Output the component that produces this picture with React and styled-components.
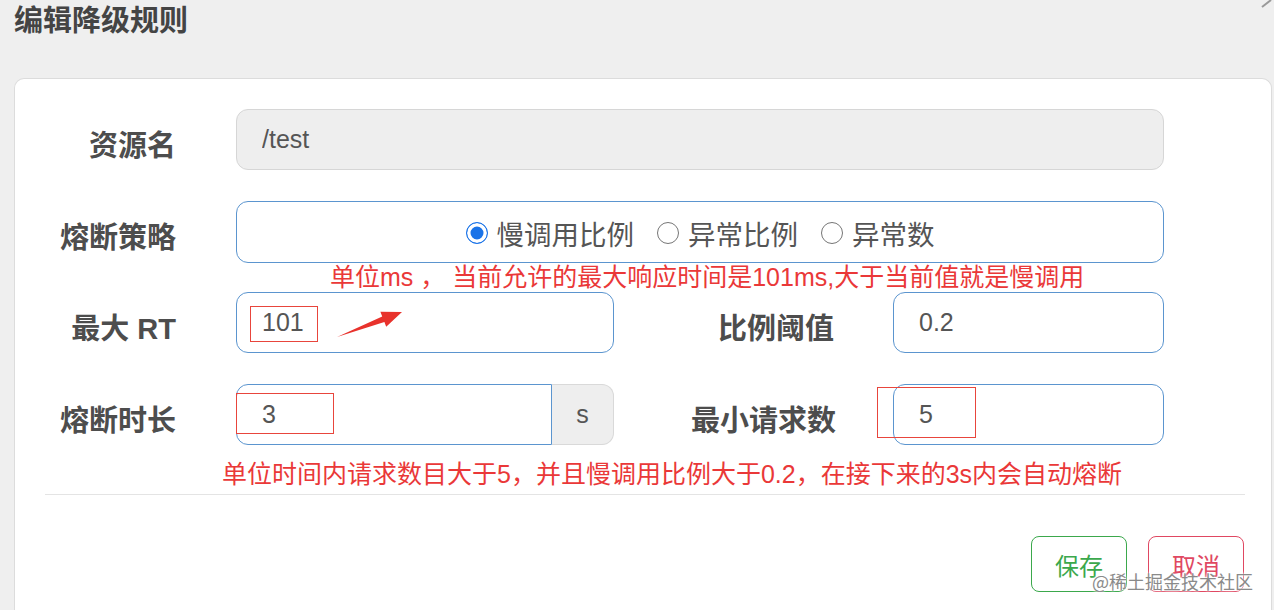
import React from "react";
import styled, { createGlobalStyle } from "styled-components";

const GlobalStyle = createGlobalStyle`
  html, body {
    margin: 0;
    height: 100%;
    overflow: hidden;
    background: #efefef;
  }
  body {
    font-family: "Liberation Sans", "Noto Sans CJK SC", sans-serif;
  }
  #root {
    height: 100%;
  }
`;

const Page = styled.div`
  height: 100%;
  display: flex;
  flex-direction: column;
  padding: 0 2px 0 14px;
  box-sizing: border-box;
`;

const Header = styled.div`
  height: 78px;
  flex-shrink: 0;
  display: flex;
  justify-content: space-between;
  align-items: flex-start;
`;

const Title = styled.h2`
  margin: 0;
  padding-top: 1px;
  font-family: "Noto Sans CJK SC", sans-serif;
  font-size: 29px;
  line-height: 34px;
  font-weight: 700;
  color: #444;
`;

const Card = styled.div`
  flex: 1;
  position: relative;
  background: #fff;
  border: 1px solid #dcdcdc;
  border-bottom: none;
  border-radius: 10px 10px 0 0;
  padding-top: 30px;
`;

const Form = styled.div`
  display: flex;
  flex-direction: column;
  padding-right: 107px;
`;

const Row = styled.div`
  display: flex;
  align-items: center;
  height: ${({ h }) => h || 61}px;
  margin-top: ${({ mt }) => mt || 0}px;
`;

const Label = styled.div`
  width: ${({ w }) => w || 161}px;
  margin-right: ${({ mr }) => mr || 60}px;
  flex-shrink: 0;
  text-align: right;
  padding-top: 6px;
  font-family: "Liberation Sans", "Noto Sans CJK SC", sans-serif;
  font-size: 29px;
  font-weight: 700;
  color: #4d4d4d;
  white-space: nowrap;
`;

const FieldWrap = styled.div`
  position: relative;
  display: flex;
  height: 100%;
  width: ${({ w }) => (w ? `${w}px` : "auto")};
  flex: ${({ w }) => (w ? "none" : 1)};
`;

const Input = styled.input`
  flex: 1;
  min-width: 0;
  height: 100%;
  box-sizing: border-box;
  margin: 0;
  padding: 0 25px;
  border: 1px solid ${({ disabled }) => (disabled ? "#d6d6d6" : "#5b95cf")};
  background: ${({ disabled }) => (disabled ? "#eeeeee" : "#fff")};
  border-radius: ${({ $group }) => ($group ? "12px 0 0 12px" : "12px")};
  font-family: "Liberation Sans", sans-serif;
  font-size: 25px;
  color: #555;
  outline: none;
`;

const Addon = styled.div`
  width: 62px;
  box-sizing: border-box;
  display: flex;
  align-items: center;
  justify-content: center;
  background: #eee;
  border: 1px solid #d9d9d9;
  border-left: none;
  border-radius: 0 12px 12px 0;
  font-size: 25px;
  color: #555;
`;

const RadioBox = styled.div`
  flex: 1;
  height: 100%;
  box-sizing: border-box;
  border: 1px solid #5b95cf;
  border-radius: 12px;
  display: flex;
  align-items: center;
  justify-content: center;
  gap: 23px;
  padding-top: 2px;
`;

const RadioItem = styled.label`
  display: flex;
  align-items: center;
  gap: 9px;
  font-family: "Noto Sans CJK SC", sans-serif;
  font-size: 27.5px;
  color: #555;
`;

const Dot = styled.span`
  width: 22px;
  height: 22px;
  box-sizing: border-box;
  border-radius: 50%;
  border: 1.5px solid ${({ on }) => (on ? "#1a73e8" : "#767676")};
  background: ${({ on }) => (on ? "#1a73e8" : "#fff")};
  box-shadow: ${({ on }) => (on ? "inset 0 0 0 3.5px #fff" : "none")};
`;

const Note = styled.div`
  height: ${({ h }) => h}px;
  padding-left: ${({ left }) => left}px;
  padding-top: ${({ pt }) => pt || 0}px;
  box-sizing: border-box;
  font-family: "Liberation Sans", "Noto Sans CJK SC", sans-serif;
  font-size: 25px;
  line-height: 29px;
  color: #ea3838;
  white-space: nowrap;
`;

const Mark = styled.div`
  position: absolute;
  left: ${({ x }) => x}px;
  top: ${({ y }) => y}px;
  width: ${({ w }) => w}px;
  height: ${({ h }) => h}px;
  border: 1px solid #e8453c;
  box-sizing: border-box;
  pointer-events: none;
`;

const Arrow = styled.svg`
  position: absolute;
  left: 99px;
  top: 17px;
`;

const Divider = styled.div`
  height: 1px;
  background: #e4e4e4;
  margin: 0 26px 0 30px;
`;

const Footer = styled.div`
  display: flex;
  justify-content: flex-end;
  gap: 21px;
  padding: 41px 27px 0 0;
`;

const Button = styled.button`
  width: 96px;
  height: 56px;
  background: #fff;
  border: 1.5px solid ${({ color }) => color};
  border-radius: 8px;
  color: ${({ color }) => color};
  font-family: "Noto Sans CJK SC", sans-serif;
  font-size: 24px;
  padding: 0;
`;

const Watermark = styled.div`
  position: absolute;
  right: 18px;
  bottom: 16px;
  font-family: "Noto Sans CJK SC", sans-serif;
  font-size: 18px;
  color: #8a8a8a;
  text-shadow: 0 0 3px #fff, 0 0 3px #fff;
`;

const App = () => {
  return (
    <>
      <GlobalStyle />
      <Page>
        <Header>
          <Title>编辑降级规则</Title>
          <svg width="12" height="8" viewBox="0 0 12 8">
            <path d="M2 7 L11 0" stroke="#999" strokeWidth="2" />
          </svg>
        </Header>
        <Card>
          <Form>
            <Row>
              <Label>资源名</Label>
              <FieldWrap>
                <Input disabled defaultValue="/test" />
              </FieldWrap>
            </Row>

            <Row mt={31} h={62}>
              <Label>熔断策略</Label>
              <RadioBox>
                <RadioItem>
                  <Dot on />
                  慢调用比例
                </RadioItem>
                <RadioItem>
                  <Dot />
                  异常比例
                </RadioItem>
                <RadioItem>
                  <Dot />
                  异常数
                </RadioItem>
              </RadioBox>
            </Row>

            <Note h={29} left={315}>
              单位ms ， 当前允许的最大响应时间是101ms,大于当前值就是慢调用
            </Note>

            <Row>
              <Label>最大 RT</Label>
              <FieldWrap w={378}>
                <Input readOnly defaultValue="101" />
                <Mark x={14} y={14} w={68} h={36} />
                <Arrow width="70" height="30" viewBox="0 0 70 30">
                  <polygon
                    points="2,28 49.4,13 51.2,17.7 67,3 45.4,2.7 47.2,7.4"
                    fill="#e8322c"
                  />
                </Arrow>
              </FieldWrap>
              <Label w={220} mr={59}>
                比例阈值
              </Label>
              <FieldWrap w={271}>
                <Input readOnly defaultValue="0.2" />
              </FieldWrap>
            </Row>

            <Row mt={31}>
              <Label>熔断时长</Label>
              <FieldWrap w={378}>
                <Input $group readOnly defaultValue="3" />
                <Addon>s</Addon>
                <Mark x={0} y={9} w={98} h={41} />
              </FieldWrap>
              <Label w={222} mr={57}>
                最小请求数
              </Label>
              <FieldWrap w={271}>
                <Input readOnly defaultValue="5" />
                <Mark x={-16} y={3} w={99} h={51} />
              </FieldWrap>
            </Row>

            <Note h={49} left={207} pt={15}>
              单位时间内请求数目大于5，并且慢调用比例大于0.2，在接下来的3s内会自动熔断
            </Note>
          </Form>

          <Divider />

          <Footer>
            <Button color="#3ba84c">保存</Button>
            <Button color="#e04862">取消</Button>
          </Footer>

          <Watermark>@稀土掘金技术社区</Watermark>
        </Card>
      </Page>
    </>
  );
};

export default App;
